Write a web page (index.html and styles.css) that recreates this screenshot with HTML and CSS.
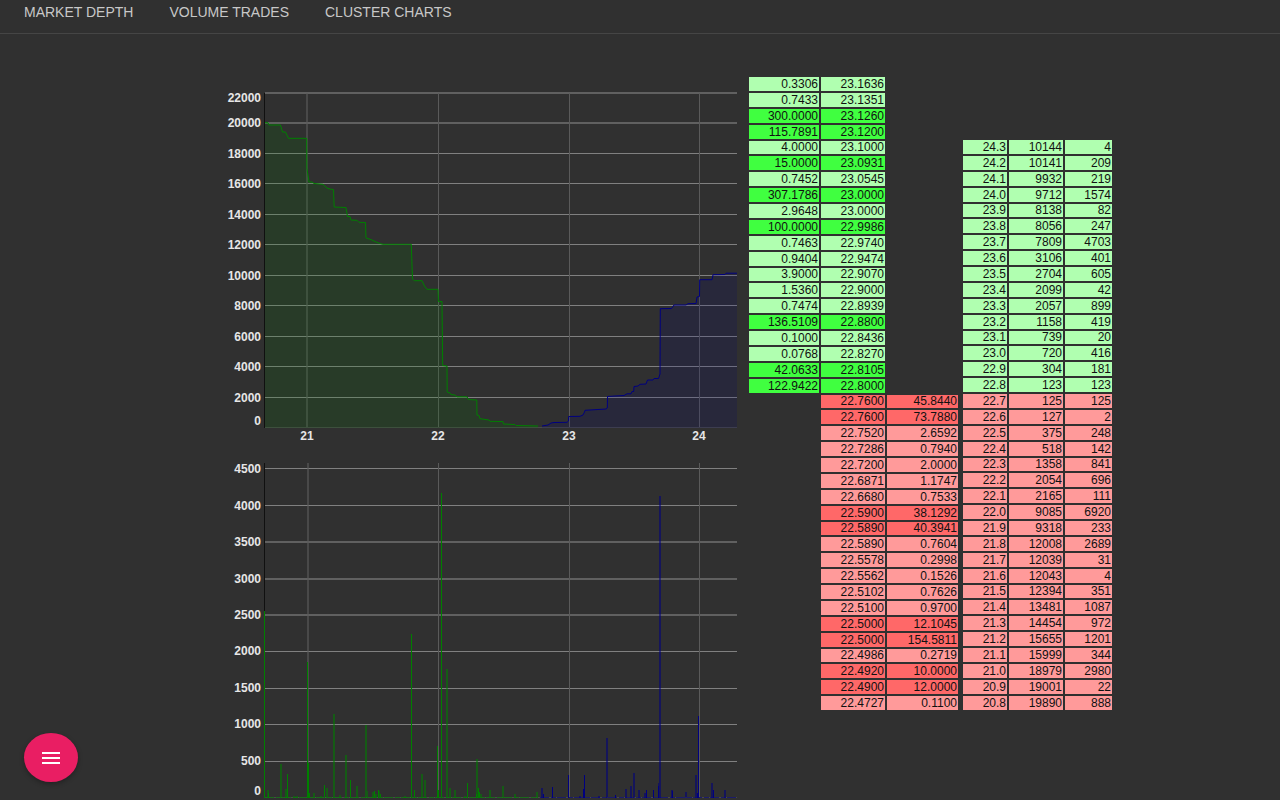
FILE: index.html
```html
<!DOCTYPE html>
<html lang="en">
<head>
    <meta charset="UTF-8">
    <meta name="viewport" content="width=device-width, initial-scale=1.0">
    <title>Market Depth</title>
    <link rel="stylesheet" href="styles.css">
</head>
<body>
    <nav class="top-nav">
        <a href="#depth">MARKET DEPTH</a>
        <a href="#volume">VOLUME TRADES</a>
        <a href="#cluster">CLUSTER CHARTS</a>
    </nav>

    <main class="content">
        <div class="charts">
            <!-- Market depth -->
            <svg class="chart" id="depth" viewBox="224 84 523 366" role="img" aria-label="Market depth">
                <path class="grid" d="M265 153.5H737M265 183.5H737M265 214.5H737M265 244.5H737M265 275.5H737M265 305.5H737M265 336.5H737M265 366.5H737M265 397.5H737"/>
                <path class="grid soft" d="M265 93H737M265 123H737"/>
                <path class="grid-v" d="M438.5 93V428M569.5 93V428M699.5 93V428"/>
                <path class="grid-v soft" d="M307 93V428"/>
                <path class="base" d="M265 427.5H737"/>
                <path class="axis" d="M264.5 93V428"/>

                <path class="bid-area" d="M265 122.7H268L269 125H280.5L282.5 132H285.5L288.5 138.3H306.7L306.9 168L309 182H312L314 183.5L323 184.3L327 188L330 189L333.5 189.5L334.2 207L346 207.5L347.5 216.5H350L351 220L357 220.3L359 222.3L365.5 222.5L366 237.8L372 240L375 241.5L380 243.5L383 244.3H411.3L412 265L412.5 279L414.5 280.7H422L424.5 286L427 289.3H438L438.5 301.5H442L442.7 365.5L447 366L447.2 392L450 393L451 394.5L455 395L457 396.8H467L468.5 399.5L476.8 400L477 415L479 415.5L480 418.7L489 420L490 421.3L503 421.5L503.5 424L515 424.5L516 425.5L538 426V428H265Z"/>
                <path class="bid-line" d="M265 122.7H268L269 125H280.5L282.5 132H285.5L288.5 138.3H306.7L306.9 168L309 182H312L314 183.5L323 184.3L327 188L330 189L333.5 189.5L334.2 207L346 207.5L347.5 216.5H350L351 220L357 220.3L359 222.3L365.5 222.5L366 237.8L372 240L375 241.5L380 243.5L383 244.3H411.3L412 265L412.5 279L414.5 280.7H422L424.5 286L427 289.3H438L438.5 301.5H442L442.7 365.5L447 366L447.2 392L450 393L451 394.5L455 395L457 396.8H467L468.5 399.5L476.8 400L477 415L479 415.5L480 418.7L489 420L490 421.3L503 421.5L503.5 424L515 424.5L516 425.5L538 426"/>
                <path class="ask-area" d="M542 426L548 425L551 423L554 422.5L567 422.3L568.5 421L568.7 416.5L580 416.3L583 415L584.5 412L585 410.3L606 409L607.3 408L607.5 396.5L615 396L624 395.5L627 393.8H631L632 391.5H633.7L634 386.5L638 386L640 384.3L646 384L647.5 380H653L654 378.5H658.5L660 374L660.3 308.7L671.5 308.5L674 305H686L688 303.7L696 303.5L697 297L699.5 296.5L699.7 279.7H712L713 274.7L725 274.5L726 273.2H737V428H542Z"/>
                <path class="ask-line" d="M542 426L548 425L551 423L554 422.5L567 422.3L568.5 421L568.7 416.5L580 416.3L583 415L584.5 412L585 410.3L606 409L607.3 408L607.5 396.5L615 396L624 395.5L627 393.8H631L632 391.5H633.7L634 386.5L638 386L640 384.3L646 384L647.5 380H653L654 378.5H658.5L660 374L660.3 308.7L671.5 308.5L674 305H686L688 303.7L696 303.5L697 297L699.5 296.5L699.7 279.7H712L713 274.7L725 274.5L726 273.2H737"/>

                <g class="labels-y">
                    <text x="261" y="102">22000</text>
                    <text x="261" y="127">20000</text>
                    <text x="261" y="158">18000</text>
                    <text x="261" y="188">16000</text>
                    <text x="261" y="219">14000</text>
                    <text x="261" y="249">12000</text>
                    <text x="261" y="280">10000</text>
                    <text x="261" y="310">8000</text>
                    <text x="261" y="341">6000</text>
                    <text x="261" y="371">4000</text>
                    <text x="261" y="402">2000</text>
                    <text x="261" y="425">0</text>
                </g>
                <g class="labels-x">
                    <text x="307" y="440">21</text>
                    <text x="438" y="440">22</text>
                    <text x="569" y="440">23</text>
                    <text x="699" y="440">24</text>
                </g>
            </svg>

            <!-- Volume by price -->
            <svg class="chart" id="volume" viewBox="224 455 523 345" role="img" aria-label="Volume trades">
                <path class="grid" d="M265 468.5H737M265 505.5H737M265 651.5H737M265 688.5H737M265 724.5H737M265 761.5H737"/>
                <path class="grid soft" d="M265 542H737M265 579H737M265 615H737"/>
                <path class="grid-v" d="M438.5 463V798M569.5 463V798M699.5 463V798"/>
                <path class="grid-v soft" d="M308 463V798"/>
                <path class="base" d="M265 797.5H737"/>
                <path class="axis" d="M264.5 463V798"/>

                <path class="bid-bar" d="M264.5 611V798M287.5 774V798M307.5 662V798M308.5 763V798M309.5 793V798M324.5 785V798M350.5 780V798M378.5 790V798M380.5 794V798M374.5 791V798M411.5 634V798M414.5 790V798M437.5 746V798M438.5 790V798M441.5 493V798M467.5 783V798M478.5 788V798M479.5 792V798M268.5 793V798M476.5 794V798"/>
                <path class="bid-bar wide" d="M268 790V798M281 764V798M286 789V798M314 793V798M327 788V798M334 714V798M340 795V798M346 755V798M357 786V798M366 725V798M367 791V798M373 792V798M376 794V798M379 791V798M405 796V798M422 774V798M425 780V798M447 669V798M450 788V798M455 790V798M477 759V798M481 794V798M490 790V798M503 786V798M515 794V798M537 792V798M294 796V798M297 796V798M321 796V798M465 796V798"/>
                <path class="bid-bar base-bar" d="M265 797.5H538"/>
                <path class="ask-bar" d="M543.5 794V798M552.5 787V798M568.5 775V798M584.5 775V798M583.5 789V798M615.5 795V798M646.5 790V798M653.5 790V798M658.5 786V798M672.5 791V798M697.5 793V798M698.5 716V798M713.5 790V798"/>
                <path class="ask-bar wide" d="M542 788V798M580 796V798M599 796V798M607 738V798M626 789V798M631 786V798M634 773V798M639 790V798M645 793V798M660 496V798M659 783V798M672 790V798M686 792V798M696 775V798M712 783V798M725 790V798"/>
                <path class="ask-bar base-bar" d="M540 797.5H737"/>

                <g class="labels-y">
                    <text x="261" y="473">4500</text>
                    <text x="261" y="510">4000</text>
                    <text x="261" y="546">3500</text>
                    <text x="261" y="583">3000</text>
                    <text x="261" y="619">2500</text>
                    <text x="261" y="655">2000</text>
                    <text x="261" y="692">1500</text>
                    <text x="261" y="728">1000</text>
                    <text x="261" y="765">500</text>
                    <text x="261" y="795">0</text>
                </g>
            </svg>
        </div>

        <div class="books">
            <!-- Order book -->
            <table class="book orders" aria-label="Order book">
                <tr class="ask"><td>0.3306</td><td>23.1636</td><td></td></tr>
                <tr class="ask"><td>0.7433</td><td>23.1351</td><td></td></tr>
                <tr class="ask big"><td>300.0000</td><td>23.1260</td><td></td></tr>
                <tr class="ask big"><td>115.7891</td><td>23.1200</td><td></td></tr>
                <tr class="ask"><td>4.0000</td><td>23.1000</td><td></td></tr>
                <tr class="ask big"><td>15.0000</td><td>23.0931</td><td></td></tr>
                <tr class="ask"><td>0.7452</td><td>23.0545</td><td></td></tr>
                <tr class="ask big"><td>307.1786</td><td>23.0000</td><td></td></tr>
                <tr class="ask"><td>2.9648</td><td>23.0000</td><td></td></tr>
                <tr class="ask big"><td>100.0000</td><td>22.9986</td><td></td></tr>
                <tr class="ask"><td>0.7463</td><td>22.9740</td><td></td></tr>
                <tr class="ask"><td>0.9404</td><td>22.9474</td><td></td></tr>
                <tr class="ask"><td>3.9000</td><td>22.9070</td><td></td></tr>
                <tr class="ask"><td>1.5360</td><td>22.9000</td><td></td></tr>
                <tr class="ask"><td>0.7474</td><td>22.8939</td><td></td></tr>
                <tr class="ask big"><td>136.5109</td><td>22.8800</td><td></td></tr>
                <tr class="ask"><td>0.1000</td><td>22.8436</td><td></td></tr>
                <tr class="ask"><td>0.0768</td><td>22.8270</td><td></td></tr>
                <tr class="ask big"><td>42.0633</td><td>22.8105</td><td></td></tr>
                <tr class="ask big"><td>122.9422</td><td>22.8000</td><td></td></tr>
                <tr class="bid big"><td></td><td>22.7600</td><td>45.8440</td></tr>
                <tr class="bid big"><td></td><td>22.7600</td><td>73.7880</td></tr>
                <tr class="bid"><td></td><td>22.7520</td><td>2.6592</td></tr>
                <tr class="bid"><td></td><td>22.7286</td><td>0.7940</td></tr>
                <tr class="bid"><td></td><td>22.7200</td><td>2.0000</td></tr>
                <tr class="bid"><td></td><td>22.6871</td><td>1.1747</td></tr>
                <tr class="bid"><td></td><td>22.6680</td><td>0.7533</td></tr>
                <tr class="bid big"><td></td><td>22.5900</td><td>38.1292</td></tr>
                <tr class="bid big"><td></td><td>22.5890</td><td>40.3941</td></tr>
                <tr class="bid"><td></td><td>22.5890</td><td>0.7604</td></tr>
                <tr class="bid"><td></td><td>22.5578</td><td>0.2998</td></tr>
                <tr class="bid"><td></td><td>22.5562</td><td>0.1526</td></tr>
                <tr class="bid"><td></td><td>22.5102</td><td>0.7626</td></tr>
                <tr class="bid"><td></td><td>22.5100</td><td>0.9700</td></tr>
                <tr class="bid big"><td></td><td>22.5000</td><td>12.1045</td></tr>
                <tr class="bid big"><td></td><td>22.5000</td><td>154.5811</td></tr>
                <tr class="bid"><td></td><td>22.4986</td><td>0.2719</td></tr>
                <tr class="bid big"><td></td><td>22.4920</td><td>10.0000</td></tr>
                <tr class="bid big"><td></td><td>22.4900</td><td>12.0000</td></tr>
                <tr class="bid"><td></td><td>22.4727</td><td>0.1100</td></tr>
            </table>

            <!-- Price levels: price, total, amount -->
            <table class="book levels" aria-label="Price levels">
                <tr class="ask"><td>24.3</td><td>10144</td><td>4</td></tr>
                <tr class="ask"><td>24.2</td><td>10141</td><td>209</td></tr>
                <tr class="ask"><td>24.1</td><td>9932</td><td>219</td></tr>
                <tr class="ask"><td>24.0</td><td>9712</td><td>1574</td></tr>
                <tr class="ask"><td>23.9</td><td>8138</td><td>82</td></tr>
                <tr class="ask"><td>23.8</td><td>8056</td><td>247</td></tr>
                <tr class="ask"><td>23.7</td><td>7809</td><td>4703</td></tr>
                <tr class="ask"><td>23.6</td><td>3106</td><td>401</td></tr>
                <tr class="ask"><td>23.5</td><td>2704</td><td>605</td></tr>
                <tr class="ask"><td>23.4</td><td>2099</td><td>42</td></tr>
                <tr class="ask"><td>23.3</td><td>2057</td><td>899</td></tr>
                <tr class="ask"><td>23.2</td><td>1158</td><td>419</td></tr>
                <tr class="ask"><td>23.1</td><td>739</td><td>20</td></tr>
                <tr class="ask"><td>23.0</td><td>720</td><td>416</td></tr>
                <tr class="ask"><td>22.9</td><td>304</td><td>181</td></tr>
                <tr class="ask"><td>22.8</td><td>123</td><td>123</td></tr>
                <tr class="bid"><td>22.7</td><td>125</td><td>125</td></tr>
                <tr class="bid"><td>22.6</td><td>127</td><td>2</td></tr>
                <tr class="bid"><td>22.5</td><td>375</td><td>248</td></tr>
                <tr class="bid"><td>22.4</td><td>518</td><td>142</td></tr>
                <tr class="bid"><td>22.3</td><td>1358</td><td>841</td></tr>
                <tr class="bid"><td>22.2</td><td>2054</td><td>696</td></tr>
                <tr class="bid"><td>22.1</td><td>2165</td><td>111</td></tr>
                <tr class="bid"><td>22.0</td><td>9085</td><td>6920</td></tr>
                <tr class="bid"><td>21.9</td><td>9318</td><td>233</td></tr>
                <tr class="bid"><td>21.8</td><td>12008</td><td>2689</td></tr>
                <tr class="bid"><td>21.7</td><td>12039</td><td>31</td></tr>
                <tr class="bid"><td>21.6</td><td>12043</td><td>4</td></tr>
                <tr class="bid"><td>21.5</td><td>12394</td><td>351</td></tr>
                <tr class="bid"><td>21.4</td><td>13481</td><td>1087</td></tr>
                <tr class="bid"><td>21.3</td><td>14454</td><td>972</td></tr>
                <tr class="bid"><td>21.2</td><td>15655</td><td>1201</td></tr>
                <tr class="bid"><td>21.1</td><td>15999</td><td>344</td></tr>
                <tr class="bid"><td>21.0</td><td>18979</td><td>2980</td></tr>
                <tr class="bid"><td>20.9</td><td>19001</td><td>22</td></tr>
                <tr class="bid"><td>20.8</td><td>19890</td><td>888</td></tr>
            </table>
        </div>
    </main>

    <button class="menu-btn" type="button" aria-label="Menu">
        <svg width="18" height="12" viewBox="0 0 18 12" aria-hidden="true">
            <path d="M0 1H18M0 6H18M0 11H18" stroke="#fff" stroke-width="2"/>
        </svg>
    </button>
</body>
</html>
```
FILE: styles.css
```css
body {
    font-family: "Liberation Sans", Arial, sans-serif;
    background-color: #303030;
    color: #fff;
    margin: 0;
}

/* Top navigation */
.top-nav {
    display: flex;
    gap: 36px;
    padding: 4px 24px 13px;
    border-bottom: 1px solid #454545;
}

.top-nav a {
    color: #c8c8c8;
    font-size: 14px;
    line-height: 16px;
    text-decoration: none;
}

/* Charts on the left, books on the right */
.content {
    display: flex;
    align-items: flex-start;
    max-width: 948px;
    margin: 0 auto;
}

.charts {
    flex: 1;
    display: flex;
    flex-direction: column;
    gap: 5px;
    padding: 50px 0 0 58px;
}

.chart {
    display: block;
    width: 100%;
}

.chart path {
    fill: none;
    stroke-width: 1;
}

.chart .grid {
    stroke: #808080;
}

.chart .grid-v {
    stroke: #5a5a5a;
}

.chart .soft {
    stroke-width: 2;
    opacity: 0.6;
}

.chart .base {
    stroke: #484848;
}

.chart .axis {
    stroke: #101010;
}

.chart .bid-line,
.chart .bid-bar {
    stroke: #008000;
}

.chart .ask-line,
.chart .ask-bar {
    stroke: #000080;
}

.chart .bid-bar,
.chart .ask-bar {
    shape-rendering: crispEdges;
}

.chart .bid-area {
    fill: rgba(0, 128, 0, 0.15);
}

.chart .ask-area {
    fill: rgba(0, 0, 128, 0.15);
}

.chart .wide {
    stroke-width: 2;
    stroke-opacity: 0.55;
}

.chart .base-bar {
    stroke-opacity: 0.6;
    stroke-dasharray: 9 2 5 1;
}

.chart text {
    fill: #e6e6e6;
    font-size: 12px;
    font-weight: bold;
}

.labels-y {
    text-anchor: end;
}

.labels-x {
    text-anchor: middle;
}

/* Order books */
.books {
    display: flex;
    align-items: flex-end;
    gap: 1px;
    padding-top: 41px;
}

.book {
    border-spacing: 2px;
    color: #111;
    font-size: 12px;
    line-height: 12px;
    text-align: right;
}

.orders {
    height: 637px;
}

.levels {
    height: 574px;
}

.book td {
    padding: 0 1px;
}

.orders td {
    width: 69px;
}

.orders td:nth-child(1) {
    width: 68px;
}

.orders td:nth-child(2) {
    width: 62px;
}

.levels td:nth-child(1) {
    width: 42px;
}

.levels td:nth-child(2) {
    width: 52px;
}

.levels td:nth-child(3) {
    width: 45px;
}

.ask td {
    background-color: #b0ffb0;
}

.ask.big td {
    background-color: #40ff40;
}

.bid td {
    background-color: #ff9a9a;
}

.bid.big td {
    background-color: #ff6868;
}

.book td:empty {
    background: none;
}

/* Floating menu button */
.menu-btn {
    position: fixed;
    left: 24px;
    bottom: 18px;
    display: flex;
    align-items: center;
    justify-content: center;
    width: 54px;
    height: 49px;
    padding: 0;
    border: none;
    border-radius: 50%;
    background-color: #e91e63;
    box-shadow: 0 2px 5px rgba(0, 0, 0, 0.3);
    cursor: pointer;
}
```
